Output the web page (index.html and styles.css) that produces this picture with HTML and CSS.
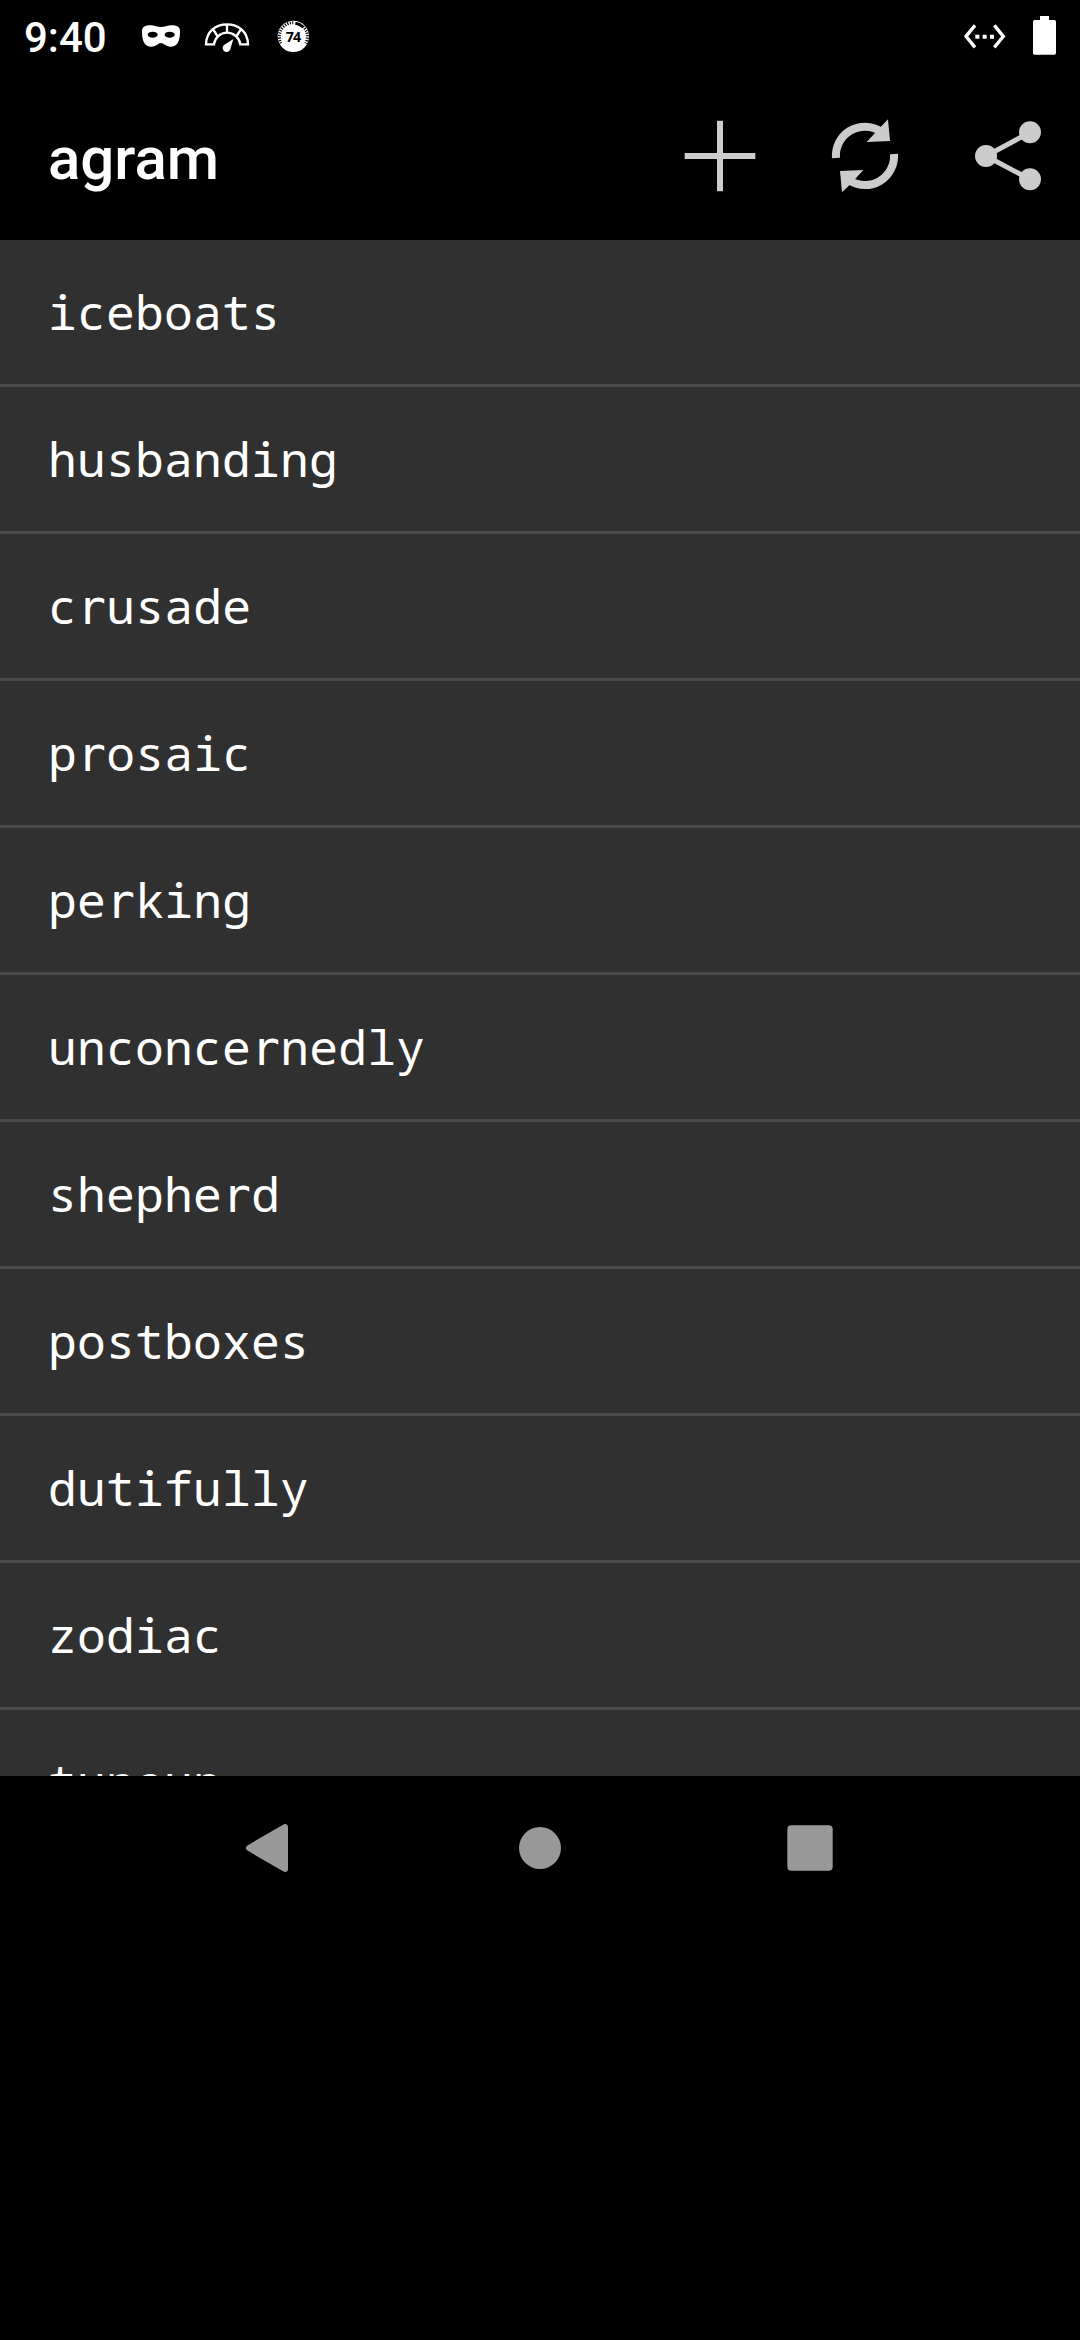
FILE: index.html
```html
<!DOCTYPE html>
<html lang="en">
<head>
<meta charset="utf-8">
<title>agram</title>
<link rel="stylesheet" href="styles.css">
</head>
<body>
<div class="screen">
  <header class="status">
    <span class="clock">9:40</span>
    <svg class="notices" viewBox="408 0 540 216" aria-hidden="true">
      <path fill="#fff" d="M446 76C462 74 471 81 483 81S504 74 520 76C535 77 541 84 540 98C539 125 531 140 512 140C497 140 491 129 483 129S469 140 454 140C435 140 427 125 426 98C425 84 431 77 446 76Z"/>
      <ellipse cx="458" cy="104" rx="15" ry="9"/><ellipse cx="509" cy="104" rx="15" ry="9"/>
      <path fill="none" stroke="#fff" stroke-width="7" d="M618 133C619 94 648 73 681 73S743 94 744 133H721C719 114 701 98 681 98S644 114 642 133ZM681 72V99M638 86L652 108M724 86L710 108"/>
      <path fill="#fff" d="M700 117L692 144A12 12 0 1 1 671 136Z"/>
      <circle cx="880" cy="109" r="47" fill="#fff"/>
      <path d="M843 130A42 42 0 0 1 880 68" fill="none" stroke="#000" stroke-width="9" stroke-dasharray="3.5 4"/>
      <path d="M909 79A42 42 0 0 1 917 130" fill="none" stroke="#000" stroke-width="9" stroke-dasharray="3.5 4"/>
      <path d="M886 70A39 39 0 0 1 909 81" fill="none" stroke="#000" stroke-width="9"/>
      <text x="879" y="125" text-anchor="middle" class="speed">74</text>
    </svg>
    <svg class="system" viewBox="60 0 300 216" aria-hidden="true">
      <path fill="none" stroke="#fff" stroke-width="10" d="M105 76L78 109L105 142M163 76L190 109L163 142"/>
      <path fill="#fff" d="M106 104h12v12h-12zM128 104h12v12h-12zM150 104h12v12h-12zM300 48h27v12h16q5 0 5 5v94q0 5-5 5h-59q-5 0-5-5V65q0-5 5-5h16z"/>
    </svg>
  </header>
  <div class="appbar">
    <h1 class="title">agram</h1>
    <svg class="actions" viewBox="60 0 1200 396" role="img" aria-label="Add, refresh, share">
      <path fill="#ccc" d="M171 92h18v97h97v18h-97v97h-18v-97H74v-18h97z"/>
      <path fill="none" stroke="#ccc" stroke-width="24" d="M528 204A87 87 0 0 1 662 124M702 192A87 87 0 0 1 569 272"/>
      <path fill="#ccc" d="M684 88L690 153L620 156L662 111ZM540 243L610 240L569 285L546 307Z"/>
      <path fill="none" stroke="#ccc" stroke-width="15" d="M1110 127L978 198L1110 268"/>
      <g fill="#ccc"><circle cx="1110" cy="127" r="33"/><circle cx="978" cy="198" r="33"/><circle cx="1110" cy="268" r="33"/></g>
    </svg>
  </div>
  <ul class="words">
    <li>iceboats</li>
    <li>husbanding</li>
    <li>c<span class="r">r</span>usade</li>
    <li>p<span class="r">r</span>osaic</li>
    <li>pe<span class="r">r</span>king</li>
    <li>unconce<span class="r">r</span>nedly</li>
    <li>shephe<span class="r">r</span>d</li>
    <li>postboxes</li>
    <li>dutifully</li>
    <li>zodiac</li>
    <li>tuneup</li>
  </ul>
  <nav class="nav">
    <svg viewBox="0 0 60 60"><path fill="#999" stroke="#999" stroke-width="6" stroke-linejoin="round" d="M9 30L45 9V51Z"/></svg>
    <svg viewBox="0 0 60 60"><circle cx="30" cy="30" r="21" fill="#999"/></svg>
    <svg viewBox="0 0 60 60"><rect x="7.3" y="7.3" width="45.4" height="45.4" rx="4" fill="#999"/></svg>
  </nav>
</div>
</body>
</html>
```
FILE: styles.css
```css
body { margin: 0; background: #000; color: #fff; }
.screen { width: 1080px; height: 2340px; display: flex; flex-direction: column; overflow: hidden; background: #000; }
.status { height: 72px; display: flex; align-items: flex-start; justify-content: space-between; }
.clock { width: 112px; padding-left: 24px; font: 500 42px/75px Roboto, sans-serif; }
.notices { width: 180px; height: 72px; margin-right: auto; }
.speed { font: 700 43px "Open Sans", sans-serif; letter-spacing: -3px; }
.system { width: 100px; height: 72px; margin-right: 20px; }
.appbar { height: 168px; display: flex; justify-content: space-between; }
.title { margin: 0; padding-left: 48px; font: 500 60px/173px Roboto, sans-serif; }
.actions { width: 400px; height: 132px; margin-top: 18px; }
.words { flex: none; height: 1536px; margin: 0; padding: 0; overflow: hidden; list-style: none; background: #303030; font: 48px/144px "Noto Sans Mono", "DejaVu Sans Mono", monospace; letter-spacing: 0.2px; }
.words li { height: 144px; padding-left: 48px; border-bottom: 3px solid #494949; }
/* plain r without the slab foot */
.r { font-family: "DejaVu Sans Mono", monospace; line-height: 1; }
.nav { height: 144px; padding: 0 135px; display: grid; grid-template-columns: repeat(3, 1fr); place-items: center; }
.nav svg { width: 60px; height: 60px; }
```
